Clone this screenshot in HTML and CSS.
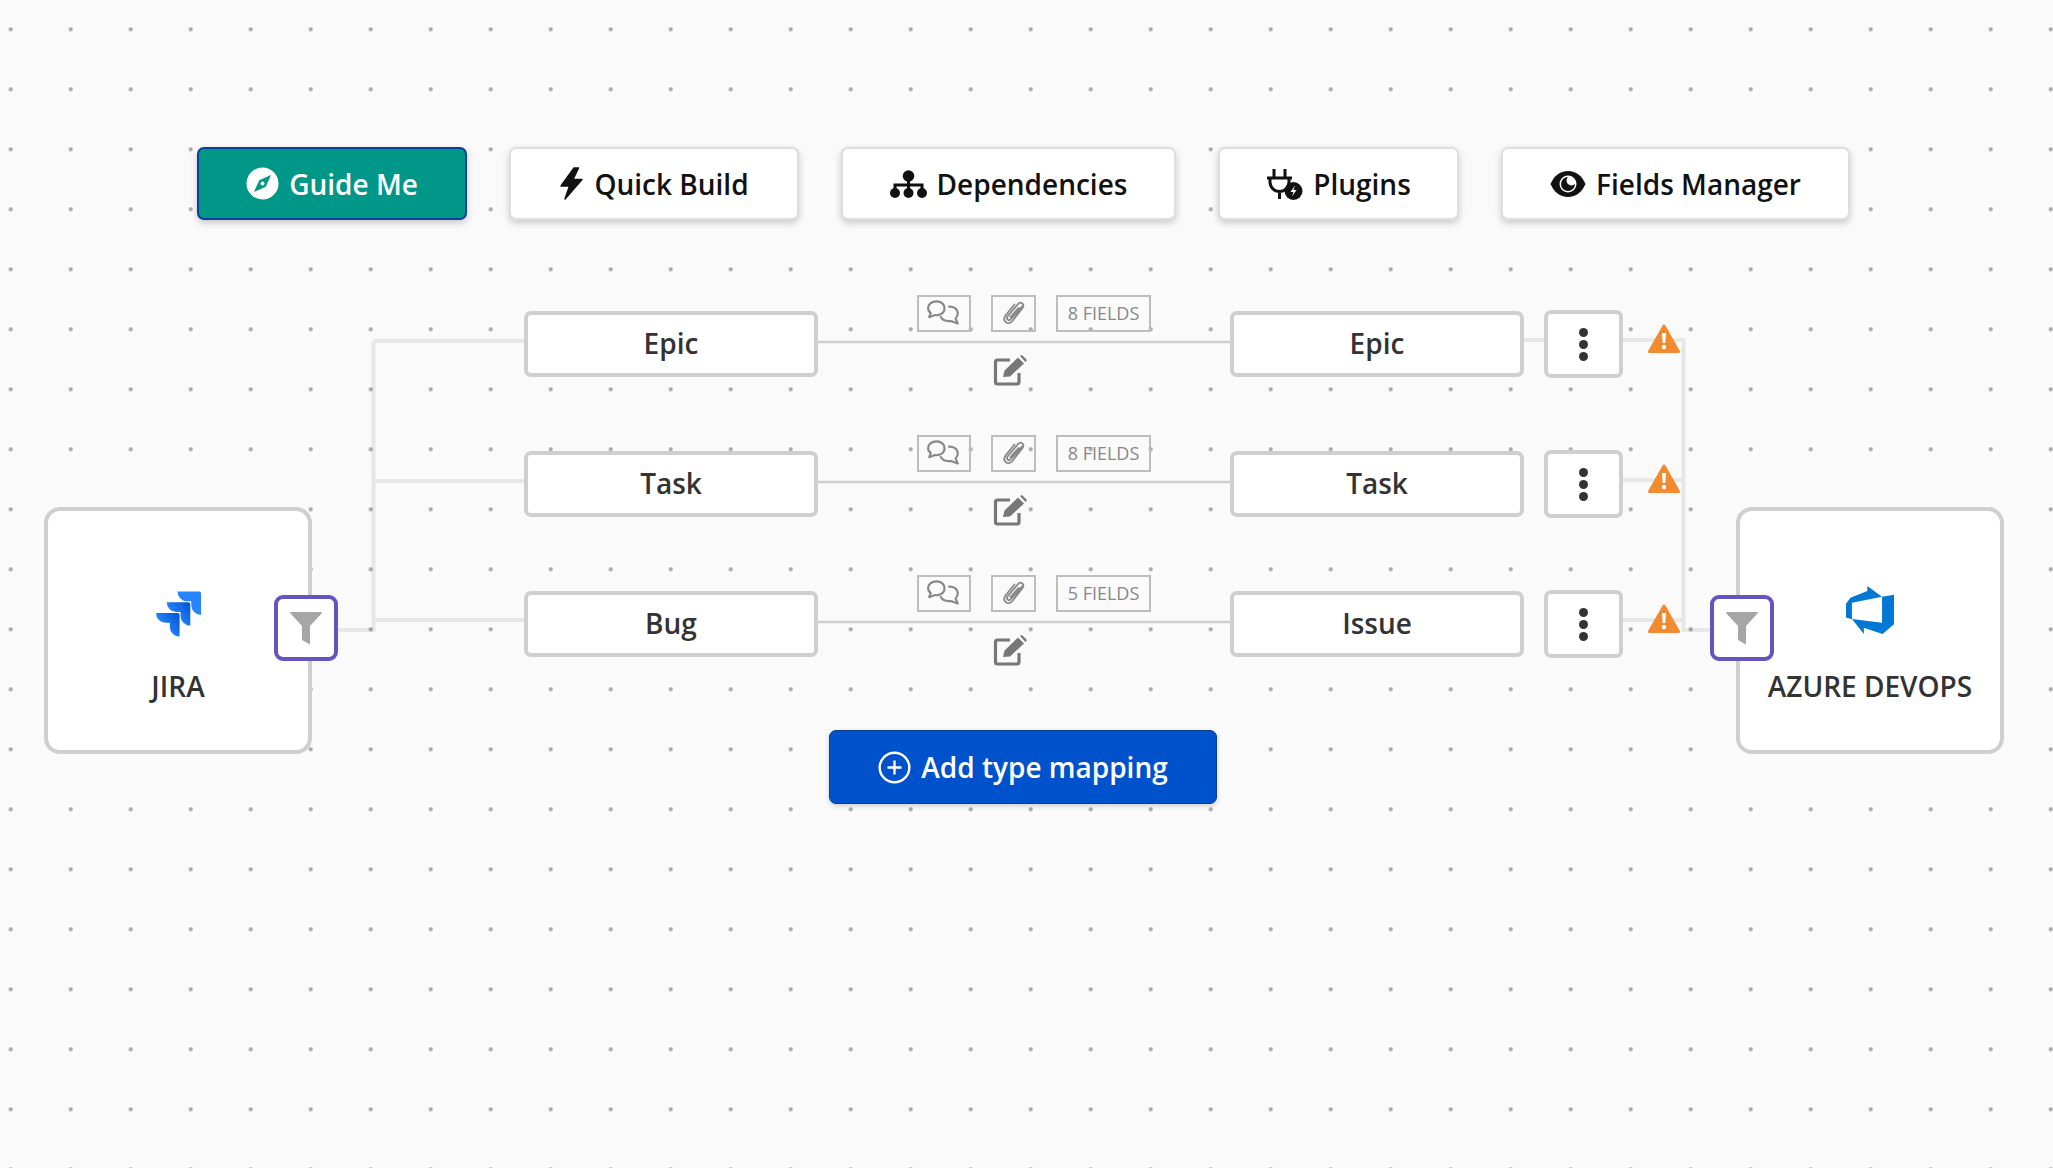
FILE: index.html
```html
<!DOCTYPE html>
<html lang="en">
<head>
  <meta charset="UTF-8">
  <title>Type mapping</title>
  <link rel="stylesheet" href="styles.css">
</head>
<body>
  <div class="board">
    <!-- wires between the nodes -->
    <svg class="wires" width="2053" height="1168" viewBox="0 0 2053 1168">
      <path class="wire" d="M337 630H373.500V341M373.500 341H525M373.500 481H525M373.500 620H525"/>
      <path class="wire" d="M1524 340H1544M1623 340H1683.500V630H1710M1623 480H1683.500M1623 620H1683.500"/>
      <path class="wire thin" d="M817 342H1230M817 482H1230M817 622H1230"/>
    </svg>

    <div class="toolbar">
      <button class="tool-btn guide">
        <svg class="tool-icon" width="33" height="33" viewBox="0 0 33 33">
          <circle cx="16.500" cy="16.500" r="16" fill="#fff"/>
          <path d="M25 8L19.800 19.800L8 25L13.200 13.200Z" fill="#009688"/>
          <circle cx="16.500" cy="16.500" r="2" fill="#fff"/>
        </svg>
        Guide Me
      </button>
      <button class="tool-btn quick">
        <svg class="tool-icon" width="25" height="33" viewBox="0 0 25 33">
          <path d="M15 1L2 19H10.500L6 32L23 12.500H14L19.500 1Z" fill="#111" stroke="#111" stroke-width="1.500" stroke-linejoin="round"/>
        </svg>
        Quick Build
      </button>
      <button class="tool-btn deps">
        <svg class="tool-icon" width="37" height="30" viewBox="0 0 37 30">
          <circle cx="18.500" cy="7" r="5.800" fill="#111"/>
          <circle cx="5" cy="24" r="5" fill="#111"/>
          <circle cx="18.500" cy="24" r="5" fill="#111"/>
          <circle cx="32" cy="24" r="5" fill="#111"/>
          <path d="M18.500 10V22M5 22V16H32V22" fill="none" stroke="#111" stroke-width="3"/>
        </svg>
        Dependencies
      </button>
      <button class="tool-btn plugins">
        <svg class="tool-icon" width="37" height="33" viewBox="0 0 37 33">
          <path d="M8 2V10M19 2V10M1 11H26M4 11V15A9.500 9.500 0 0 0 23 15V11M13.500 24V32" fill="none" stroke="#111" stroke-width="3"/>
          <circle cx="27.500" cy="24" r="9" fill="#111"/>
          <path d="M29 18.500L24.500 25H27.500L26 29.500L30.500 23H27.500Z" fill="#fff"/>
        </svg>
        Plugins
      </button>
      <button class="tool-btn manager">
        <svg class="tool-icon" width="36" height="28" viewBox="0 0 36 28">
          <path d="M0.500 14C4 6 10 1 18 1S32 6 35.500 14C32 22 26 27 18 27S4 22 0.500 14Z" fill="#111"/>
          <circle cx="18" cy="14" r="8.500" fill="#fff"/>
          <path d="M18 7A7 7 0 1 0 25 14A4.500 4.500 0 0 1 18 7Z" fill="#111"/>
        </svg>
        Fields Manager
      </button>
    </div>

    <div class="diagram">
      <div class="system source">
        <svg class="system-logo" width="45" height="46" viewBox="0 0 24 24">
          <defs>
            <linearGradient id="jiraA" x1="1" y1="0" x2="0.300" y2="0.600">
              <stop offset="0" stop-color="#0052cc"/>
              <stop offset="1" stop-color="#2684ff"/>
            </linearGradient>
          </defs>
          <path d="M23.013 0H11.455a5.215 5.215 0 0 0 5.215 5.215h2.129v2.057A5.215 5.215 0 0 0 24 12.483V1.005A1.001 1.001 0 0 0 23.013 0Z" fill="#2684ff"/>
          <path d="M17.294 5.757H5.736a5.215 5.215 0 0 0 5.215 5.214h2.129v2.058a5.218 5.218 0 0 0 5.215 5.214V6.758a1.001 1.001 0 0 0-1.001-1.001Z" fill="url(#jiraA)"/>
          <path d="M11.571 11.513H0a5.218 5.218 0 0 0 5.232 5.215h2.13v2.057A5.215 5.215 0 0 0 12.575 24V12.518a1.005 1.005 0 0 0-1.005-1.005Z" fill="url(#jiraA)"/>
        </svg>
        <span class="system-name">JIRA</span>
        <button class="filter-btn">
          <svg width="32" height="33" viewBox="0 0 32 33"><path d="M1 0H31Q32.500 0 31.500 1.500L20 14V32.500L12 28V14L0.500 1.500Q-0.500 0 1 0Z" fill="#a6a6a6"/></svg>
        </button>
      </div>

      <div class="mappings">
        <div class="mapping">
          <div class="type-box">Epic</div>
          <div class="link">
            <div class="chips">
              <span class="chip chat">
                <svg width="36" height="28" viewBox="0 0 34 26"><path d="M10 2C5 2 2 5 2 8.500C2 10.500 3 12 4.500 13L3 17L8.500 15C13.500 15.500 17.500 13 17.500 8.500C17.500 5 14.500 2 10 2ZM21 7C26 6.500 30 9 30 13.500C30 15.500 29 17 28 18L30 23L23.500 20.500C19 21 15 19.500 13.500 16" fill="none" stroke="#888" stroke-width="2" stroke-linejoin="round"/></svg>
              </span>
              <span class="chip clip">
                <svg width="22" height="26" viewBox="0 0 22 26"><path d="M19 6.500L8 19C6 21.500 3 19.500 4.500 16.500L15 4C18 1 22 4 19.500 8L9 21.500C5.500 25.500 -1.500 21.500 2.500 15.500L11.500 4.500M15.500 8L7.500 17" fill="none" stroke="#888" stroke-width="1.800" stroke-linecap="round"/></svg>
              </span>
              <span class="chip fields">8 FIELDS</span>
            </div>
            <svg class="edit" width="33" height="30" viewBox="0 0 33 30"><path d="M16 4H3.500Q1.500 4 1.500 6V26Q1.500 28 3.500 28H23Q25 28 25 26V17" fill="none" stroke="#777" stroke-width="3.200"/><path d="M9 21L10.500 14.500L24 1.500L30 7.500L16 20.500Z M26 0L28 -1L33 4L31.500 6Z" fill="#777"/></svg>
          </div>
          <div class="type-box">Epic</div>
          <button class="menu-btn"><i></i><i></i><i></i></button>
          <svg class="warn" width="32" height="30" viewBox="0 0 32 30"><path d="M16 2L30.500 27.500H1.500Z" fill="#f28b30" stroke="#f28b30" stroke-width="3" stroke-linejoin="round"/><path d="M14 9H18L17.300 19H14.700Z" fill="#fff"/><circle cx="16" cy="23" r="2.200" fill="#fff"/></svg>
        </div>

        <div class="mapping">
          <div class="type-box">Task</div>
          <div class="link">
            <div class="chips">
              <span class="chip chat">
                <svg width="36" height="28" viewBox="0 0 34 26"><path d="M10 2C5 2 2 5 2 8.500C2 10.500 3 12 4.500 13L3 17L8.500 15C13.500 15.500 17.500 13 17.500 8.500C17.500 5 14.500 2 10 2ZM21 7C26 6.500 30 9 30 13.500C30 15.500 29 17 28 18L30 23L23.500 20.500C19 21 15 19.500 13.500 16" fill="none" stroke="#888" stroke-width="2" stroke-linejoin="round"/></svg>
              </span>
              <span class="chip clip">
                <svg width="22" height="26" viewBox="0 0 22 26"><path d="M19 6.500L8 19C6 21.500 3 19.500 4.500 16.500L15 4C18 1 22 4 19.500 8L9 21.500C5.500 25.500 -1.500 21.500 2.500 15.500L11.500 4.500M15.500 8L7.500 17" fill="none" stroke="#888" stroke-width="1.800" stroke-linecap="round"/></svg>
              </span>
              <span class="chip fields">8 FIELDS</span>
            </div>
            <svg class="edit" width="33" height="30" viewBox="0 0 33 30"><path d="M16 4H3.500Q1.500 4 1.500 6V26Q1.500 28 3.500 28H23Q25 28 25 26V17" fill="none" stroke="#777" stroke-width="3.200"/><path d="M9 21L10.500 14.500L24 1.500L30 7.500L16 20.500Z M26 0L28 -1L33 4L31.500 6Z" fill="#777"/></svg>
          </div>
          <div class="type-box">Task</div>
          <button class="menu-btn"><i></i><i></i><i></i></button>
          <svg class="warn" width="32" height="30" viewBox="0 0 32 30"><path d="M16 2L30.500 27.500H1.500Z" fill="#f28b30" stroke="#f28b30" stroke-width="3" stroke-linejoin="round"/><path d="M14 9H18L17.300 19H14.700Z" fill="#fff"/><circle cx="16" cy="23" r="2.200" fill="#fff"/></svg>
        </div>

        <div class="mapping">
          <div class="type-box">Bug</div>
          <div class="link">
            <div class="chips">
              <span class="chip chat">
                <svg width="36" height="28" viewBox="0 0 34 26"><path d="M10 2C5 2 2 5 2 8.500C2 10.500 3 12 4.500 13L3 17L8.500 15C13.500 15.500 17.500 13 17.500 8.500C17.500 5 14.500 2 10 2ZM21 7C26 6.500 30 9 30 13.500C30 15.500 29 17 28 18L30 23L23.500 20.500C19 21 15 19.500 13.500 16" fill="none" stroke="#888" stroke-width="2" stroke-linejoin="round"/></svg>
              </span>
              <span class="chip clip">
                <svg width="22" height="26" viewBox="0 0 22 26"><path d="M19 6.500L8 19C6 21.500 3 19.500 4.500 16.500L15 4C18 1 22 4 19.500 8L9 21.500C5.500 25.500 -1.500 21.500 2.500 15.500L11.500 4.500M15.500 8L7.500 17" fill="none" stroke="#888" stroke-width="1.800" stroke-linecap="round"/></svg>
              </span>
              <span class="chip fields">5 FIELDS</span>
            </div>
            <svg class="edit" width="33" height="30" viewBox="0 0 33 30"><path d="M16 4H3.500Q1.500 4 1.500 6V26Q1.500 28 3.500 28H23Q25 28 25 26V17" fill="none" stroke="#777" stroke-width="3.200"/><path d="M9 21L10.500 14.500L24 1.500L30 7.500L16 20.500Z M26 0L28 -1L33 4L31.500 6Z" fill="#777"/></svg>
          </div>
          <div class="type-box">Issue</div>
          <button class="menu-btn"><i></i><i></i><i></i></button>
          <svg class="warn" width="32" height="30" viewBox="0 0 32 30"><path d="M16 2L30.500 27.500H1.500Z" fill="#f28b30" stroke="#f28b30" stroke-width="3" stroke-linejoin="round"/><path d="M14 9H18L17.300 19H14.700Z" fill="#fff"/><circle cx="16" cy="23" r="2.200" fill="#fff"/></svg>
        </div>

        <button class="add-btn">
          <svg width="33" height="33" viewBox="0 0 33 33"><circle cx="16.500" cy="16.500" r="14.800" fill="none" stroke="#fff" stroke-width="2.400"/><path d="M16.500 9.500V23.500M9.500 16.500H23.500" stroke="#fff" stroke-width="2.400"/></svg>
          Add type mapping
        </button>
      </div>

      <div class="system target">
        <svg class="system-logo" width="48" height="48" viewBox="0 0 24 24"><path d="M0 8.877L2.247 5.910l8.405-3.416V.022l7.370 5.393L2.966 8.338v8.225L0 15.707zm24-4.450v14.651l-5.753 4.900-9.303-3.057v3.056l-5.978-7.416 15.057 1.798V5.415z" fill="#0078d4"/></svg>
        <span class="system-name">AZURE DEVOPS</span>
        <button class="filter-btn">
          <svg width="32" height="33" viewBox="0 0 32 33"><path d="M1 0H31Q32.500 0 31.500 1.500L20 14V32.500L12 28V14L0.500 1.500Q-0.500 0 1 0Z" fill="#a6a6a6"/></svg>
        </button>
      </div>
    </div>
  </div>
</body>
</html>
```

FILE: styles.css
```css
* {
  box-sizing: border-box;
}
html, body {
  margin: 0;
  height: 100%;
  overflow: hidden;
}
body {
  font-family: "Open Sans", sans-serif;
  color: #333;
}
button {
  font-family: inherit;
  cursor: pointer;
}
.board {
  position: relative;
  width: 2053px;
  height: 1168px;
  overflow: hidden;
  background-color: #fafafa;
  background-image: radial-gradient(circle at center, #a9a9a9 0, #a9a9a9 1.6px, transparent 2.4px);
  background-size: 60px 60px;
  background-position: -19.3px -0.7px;
}
.wires {
  position: absolute;
  left: 0;
  top: 0;
}
.wire {
  fill: none;
  stroke: rgba(0, 0, 0, .075);
  stroke-width: 4;
}
.wire.thin {
  stroke: rgba(0, 0, 0, .18);
  stroke-width: 2.500;
}

/* top buttons */
.toolbar {
  position: relative;
  display: flex;
  gap: 42px;
  padding: 147px 0 0 197px;
}
.tool-btn {
  display: flex;
  align-items: center;
  justify-content: center;
  gap: 10px;
  height: 73px;
  padding: 0;
  background: #fff;
  color: #111;
  border: 2px solid #dedede;
  border-radius: 7px;
  box-shadow: 0 3px 7px rgba(0, 0, 0, .2);
  font-size: 28px;
  font-weight: 600;
  white-space: nowrap;
}
.tool-btn.guide {
  width: 270px;
  background: #009688;
  color: #fff;
  border-color: #0b3f9b;
}
.quick {
  width: 290px;
}
.deps {
  width: 335px;
}
.plugins {
  width: 241px;
}
.manager {
  width: 349px;
}
.tool-icon {
  flex: none;
}

/* diagram */
.diagram {
  position: relative;
  display: flex;
  align-items: flex-start;
  margin-top: 54px;
  padding-left: 44px;
}
.system {
  position: relative;
  display: flex;
  flex-direction: column;
  align-items: center;
  flex: none;
  width: 268px;
  height: 247px;
  margin-top: 233px;
  padding-top: 80px;
  background: #fff;
  border: 4px solid #cfcfcf;
  border-radius: 16px;
}
.target .system-logo {
  margin-top: -5px;
  margin-bottom: 3px;
}
.system-name {
  margin-top: 30px;
  font-size: 28px;
  font-weight: 600;
  white-space: nowrap;
}
.filter-btn {
  position: absolute;
  top: 84px;
  display: flex;
  align-items: center;
  justify-content: center;
  width: 64px;
  height: 66px;
  padding: 0;
  background: #fff;
  border: 4px solid #6554c0;
  border-radius: 9px;
}
.source .filter-btn {
  right: -30px;
}
.target .filter-btn {
  left: -30px;
}
.mappings {
  position: relative;
  flex: none;
  width: 1155px;
  margin: 0 57px 0 212px;
}
.mapping {
  display: flex;
  align-items: center;
  height: 140px;
}
.type-box {
  display: flex;
  align-items: center;
  justify-content: center;
  flex: none;
  width: 294px;
  height: 66px;
  padding-bottom: 2px;
  background: #fff;
  border: 4px solid #cfcfcf;
  border-radius: 7px;
  font-size: 28px;
  font-weight: 600;
}
.link {
  display: flex;
  flex-direction: column;
  align-items: center;
  flex: none;
  width: 412px;
  margin-bottom: 8px;
}
.chips {
  display: flex;
  gap: 20px;
  margin-left: 20px;
}
.chip {
  display: flex;
  align-items: center;
  justify-content: center;
  height: 37px;
  padding-bottom: 1px;
  border: 2px solid #bdbdbd;
  color: #888;
  font-size: 18px;
}
.chat {
  width: 54px;
}
.clip {
  width: 45px;
}
.fields {
  width: 95px;
}
.edit {
  margin: 24px 28px 0 0;
  overflow: visible;
}
.menu-btn {
  display: flex;
  flex-direction: column;
  align-items: center;
  justify-content: center;
  gap: 3px;
  flex: none;
  width: 79px;
  height: 68px;
  margin-left: 20px;
  padding: 0;
  background: #fff;
  border: 4px solid #cfcfcf;
  border-radius: 7px;
}
.menu-btn i {
  width: 9px;
  height: 9px;
  border-radius: 50%;
  background: #333;
}
.warn {
  flex: none;
  margin: 0 0 10px 25px;
}
.add-btn {
  display: flex;
  align-items: center;
  justify-content: center;
  gap: 10px;
  width: 388px;
  height: 74px;
  margin: 36px 0 0 305px;
  background: #0052cc;
  color: #fff;
  border: 1px solid #0a3f92;
  border-radius: 7px;
  box-shadow: 0 2px 5px rgba(0, 0, 0, .18);
  font-size: 28px;
  font-weight: 600;
}
```
